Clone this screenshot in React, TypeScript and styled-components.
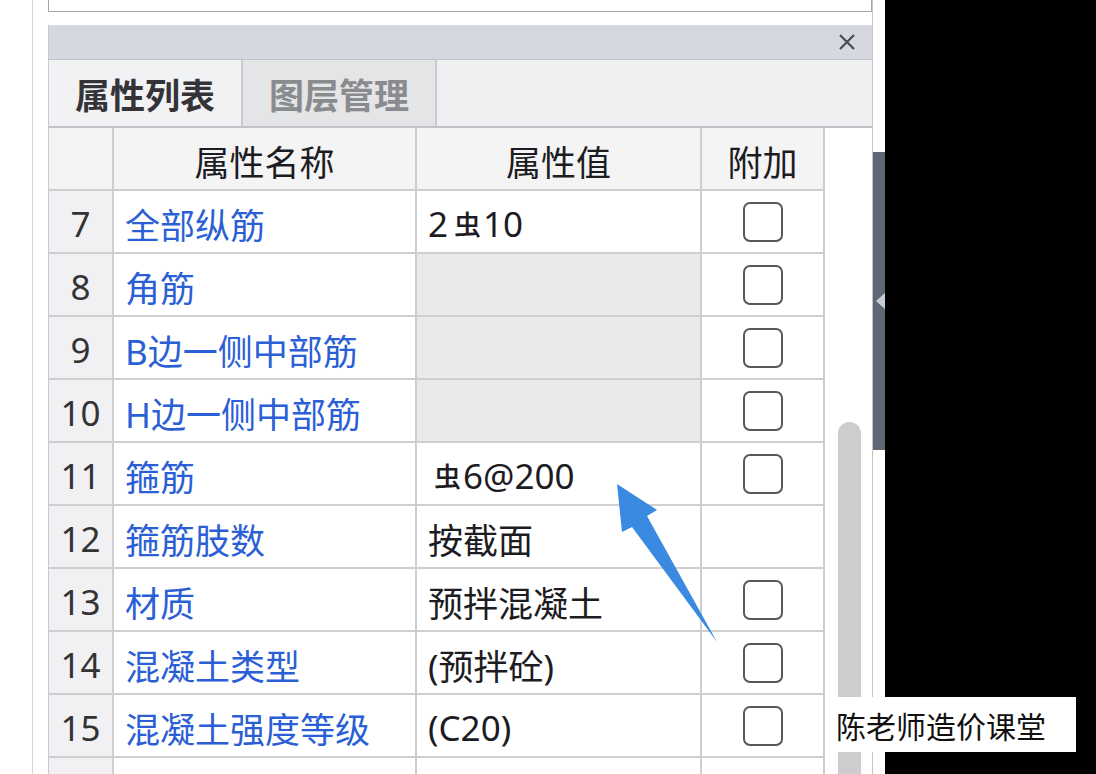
import React from 'react';
import styled, { createGlobalStyle } from 'styled-components';

const GlobalStyle = createGlobalStyle`
  html, body {
    margin: 0;
    padding: 0;
    background: #000;
  }
  * {
    box-sizing: border-box;
  }
`;

const FONT = `"Noto Sans", "Noto Sans CJK SC", sans-serif`;
const LINE = '#cfcfd2';

interface IRow {
  no: number;
  name: string;
  value?: React.ReactNode;
  grey?: boolean;
  check?: boolean;
}

const Screen = styled.div`
  position: relative;
  width: 1096px;
  height: 774px;
  display: flex;
  overflow: hidden;
  font-family: ${FONT};
  background: #000;
`;

const Gutter = styled.div`
  width: 48px;
  flex: none;
  background: #fff;
  .rule {
    width: 33px;
    height: 100%;
    border-right: 1px solid #d4d4d6;
  }
`;

const Panel = styled.div`
  width: 825px;
  flex: none;
  display: flex;
  flex-direction: column;
  background: #fff;
  border-right: 1px solid #c4c4c8;
`;

const TopBox = styled.div`
  height: 12px;
  border: 1px solid #a4a4a8;
  border-top: none;
  margin-bottom: 13px;
`;

const TitleBar = styled.div`
  height: 35px;
  flex: none;
  background: #d5d8de;
  border-left: 1px solid #c8cad0;
  border-bottom: 1px solid #bfc2c8;
  display: flex;
  align-items: center;
  justify-content: flex-end;
  padding-right: 17px;
`;

const Tabs = styled.div`
  height: 68px;
  flex: none;
  display: flex;
  background: #eff0f2;
  border-left: 1px solid #c8cad0;
  border-bottom: 2px solid #c2c3c7;
`;

const Tab = styled.div<{ $active?: boolean }>`
  width: 194px;
  display: flex;
  align-items: center;
  justify-content: center;
  font-size: 35px;
  font-weight: 700;
  color: ${(p) => (p.$active ? '#333338' : '#8a8b8e')};
  background: ${(p) => (p.$active ? '#f1f2f4' : '#e4e5e7')};
  border-right: 2px solid #cacbcf;
`;

const Body = styled.div`
  flex: 1;
  display: flex;
  min-height: 0;
  overflow: hidden;
`;

const Grid = styled.div`
  width: 776px;
  flex: none;
  display: grid;
  grid-template-columns: 65px 303px 285px 123px;
  grid-auto-rows: 63px;
  align-content: start;
  border-left: 1px solid #c8cad0;
`;

const Cell = styled.div<{ $kind?: 'head' | 'no' | 'name' | 'value' | 'check'; $grey?: boolean }>`
  display: flex;
  align-items: center;
  border-right: 2px solid ${LINE};
  border-bottom: 2px solid ${LINE};
  font-size: 35px;
  white-space: nowrap;
  overflow: hidden;
  justify-content: ${(p) =>
    p.$kind === 'head' || p.$kind === 'no' || p.$kind === 'check' ? 'center' : 'flex-start'};
  padding-left: ${(p) => (p.$kind === 'name' || p.$kind === 'value' ? '11px' : '0')};
  color: ${(p) => (p.$kind === 'name' ? '#2b5fd6' : p.$kind === 'no' ? '#333' : '#1c1c22')};
  background: ${(p) =>
    p.$kind === 'head'
      ? '#f4f4f5'
      : p.$kind === 'no'
      ? '#f1f1f3'
      : p.$grey
      ? '#eaeaeb'
      : '#fff'};
  padding-top: 4px;
`;

const Steel = styled.span`
  font-family: "Noto Sans CJK SC", sans-serif;
  font-size: 27px;
  font-weight: 500;
  vertical-align: 0.22em;
  margin: 0 2px 0 6px;
`;

const CheckBox = styled.div`
  width: 40px;
  height: 40px;
  border: 2px solid #58585c;
  border-radius: 7px;
  background: #fff;
  margin-top: -4px;
`;

const ScrollTrack = styled.div`
  flex: 1;
  display: flex;
  flex-direction: column;
  padding: 294px 0 0 14px;
  .thumb {
    width: 23px;
    flex: 1;
    background: #cdcdd0;
    border-radius: 12px 12px 0 0;
  }
`;

const SideStrip = styled.div`
  width: 12px;
  flex: none;
  background: #fff;
  padding-top: 152px;
  .handle {
    height: 298px;
    background: #5f6874;
    display: flex;
    align-items: center;
  }
  .handle i {
    width: 0;
    height: 0;
    margin-left: 3px;
    border-top: 8px solid transparent;
    border-bottom: 8px solid transparent;
    border-right: 9px solid #c9cdd4;
  }
`;

const Black = styled.div`
  flex: 1;
  background: #000;
`;

const Watermark = styled.div`
  position: absolute;
  left: 828px;
  top: 697px;
  width: 248px;
  height: 55px;
  background: #fff;
  display: flex;
  align-items: center;
  padding-left: 8px;
  font-family: "Noto Sans CJK SC", sans-serif;
  font-size: 30px;
  color: #111;
`;

const Arrow = styled.svg`
  position: absolute;
  left: 0;
  top: 0;
  pointer-events: none;
`;

const rows: IRow[] = [
  { no: 7, name: '全部纵筋', value: <>2<Steel>虫</Steel>10</>, check: true },
  { no: 8, name: '角筋', grey: true, check: true },
  { no: 9, name: 'B边一侧中部筋', grey: true, check: true },
  { no: 10, name: 'H边一侧中部筋', grey: true, check: true },
  { no: 11, name: '箍筋', value: <><Steel>虫</Steel>6@200</>, check: true },
  { no: 12, name: '箍筋肢数', value: '按截面' },
  { no: 13, name: '材质', value: '预拌混凝土', check: true },
  { no: 14, name: '混凝土类型', value: '(预拌砼)', check: true },
  { no: 15, name: '混凝土强度等级', value: '(C20)', check: true },
  { no: 16, name: '', check: false },
];

const App = () => {
  return (
    <Screen>
      <GlobalStyle />
      <Gutter>
        <div className='rule' />
      </Gutter>
      <Panel>
        <TopBox />
        <TitleBar>
          <svg width='16' height='16' viewBox='0 0 16 16'>
            <path d='M1 1 L15 15 M15 1 L1 15' stroke='#4a4b4f' strokeWidth='2.2' />
          </svg>
        </TitleBar>
        <Tabs>
          <Tab $active>属性列表</Tab>
          <Tab>图层管理</Tab>
        </Tabs>
        <Body>
          <Grid>
            <Cell $kind='head' />
            <Cell $kind='head'>属性名称</Cell>
            <Cell $kind='head'>属性值</Cell>
            <Cell $kind='head'>附加</Cell>
            {rows.map((r) => (
              <React.Fragment key={r.no}>
                <Cell $kind='no'>{r.no < 16 ? r.no : ''}</Cell>
                <Cell $kind='name'>{r.name}</Cell>
                <Cell $kind='value' $grey={r.grey}>
                  {r.value}
                </Cell>
                <Cell $kind='check'>{r.check && <CheckBox />}</Cell>
              </React.Fragment>
            ))}
          </Grid>
          <ScrollTrack>
            <div className='thumb' />
          </ScrollTrack>
        </Body>
      </Panel>
      <SideStrip>
        <div className='handle'>
          <i />
        </div>
      </SideStrip>
      <Black />
      <Arrow width='1096' height='774' viewBox='0 0 1096 774'>
        <polygon
          points='617,484 657,510 647,516 717,642 632,527 622,532'
          fill='#3a8ae2'
        />
      </Arrow>
      <Watermark>陈老师造价课堂</Watermark>
    </Screen>
  );
};

export default App;
